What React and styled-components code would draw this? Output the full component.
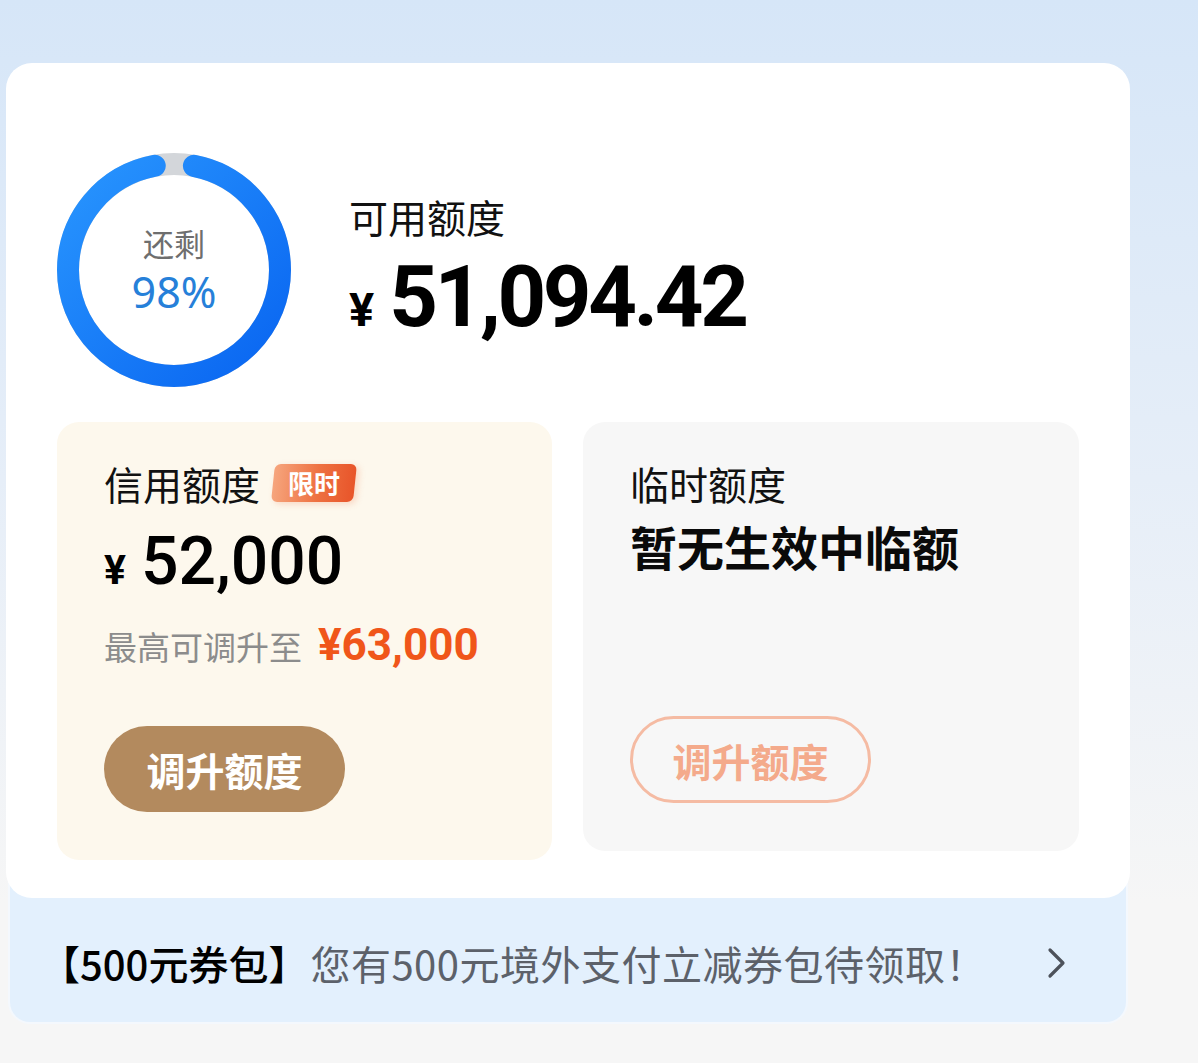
import styled, { createGlobalStyle } from "styled-components";

const GlobalStyle = createGlobalStyle`
    html, body {
        margin: 0;
        padding: 0;
    }
    body {
        background: linear-gradient(180deg, #d6e6f8 0%, #e6eef8 45%, #f6f6f6 85%, #f6f6f6 100%);
        min-height: 1063px;
        font-family: Roboto, "Noto Sans CJK SC", sans-serif;
    }
`;

const CJK = `"Noto Sans CJK SC", "Noto Sans", sans-serif`;
const NUM = `Roboto, "Noto Sans CJK SC", sans-serif`;

// ring drawn as svg: grey track with a blue arc on top
const Ring = ({ percent }) => {
    const r = 106;
    const c = 2 * Math.PI * r;
    const gap = 40; // visible grey gap plus the two round caps
    const blue = c - gap;
    return (
        <RingBox>
            <svg width="234" height="234" viewBox="0 0 234 234">
                <defs>
                    {/* coordinates are in the rotated frame, so the light side lands top-left */}
                    <linearGradient id="ringGrad" x1="234" y1="0" x2="0" y2="234" gradientUnits="userSpaceOnUse">
                        <stop offset="0%" stopColor="#2a98ff" />
                        <stop offset="100%" stopColor="#0762f0" />
                    </linearGradient>
                </defs>
                <circle cx="117" cy="117" r={r} fill="none" stroke="#d3d6da" strokeWidth="22" />
                <g transform="rotate(-90 117 117)">
                    <circle
                        cx="117"
                        cy="117"
                        r={r}
                        fill="none"
                        stroke="url(#ringGrad)"
                        strokeWidth="22"
                        strokeLinecap="round"
                        strokeDasharray={`${blue} ${c}`}
                        strokeDashoffset={-gap / 2}
                    />
                </g>
            </svg>
            <RingText>
                <RingLabel>还剩</RingLabel>
                <RingValue>{percent}%</RingValue>
            </RingText>
        </RingBox>
    );
};

const Chevron = () => (
    <svg width="22" height="32" viewBox="0 0 22 32">
        <path d="M4 3 L17 16 L4 29" fill="none" stroke="#4d525b" strokeWidth="3.2" strokeLinecap="round" strokeLinejoin="round" />
    </svg>
);

const App = () => {
    return (
        <>
            <GlobalStyle />
            <Page>
                <Card>
                    <TopRow>
                        <Ring percent={98} />
                        <Available>
                            <Title>可用额度</Title>
                            <BigAmount>
                                <Yen $size="47px">¥</Yen>
                                <span>51,094.42</span>
                            </BigAmount>
                        </Available>
                    </TopRow>
                    <SubGrid>
                        <SubCard $bg="#fdf8ed" $height="438px">
                            <TitleRow>
                                <Title>信用额度</Title>
                                <Badge><span>限时</span></Badge>
                            </TitleRow>
                            <MidAmount>
                                <Yen $size="41px">¥</Yen>
                                <span>52,000</span>
                            </MidAmount>
                            <Hint>
                                最高可调升至<Highlight>¥63,000</Highlight>
                            </Hint>
                            <FilledButton>调升额度</FilledButton>
                        </SubCard>
                        <SubCard $bg="#f7f7f7" $height="429px">
                            <Title>临时额度</Title>
                            <Status>暂无生效中临额</Status>
                            <OutlineButton>调升额度</OutlineButton>
                        </SubCard>
                    </SubGrid>
                </Card>
                <Banner>
                    <BannerText>
                        <strong>【500元券包】</strong>您有500元境外支付立减券包待领取！
                    </BannerText>
                    <Chevron />
                </Banner>
            </Page>
        </>
    );
};

export default App;


const Page = styled.div`
    display: flex;
    flex-direction: column;
    padding: 63px 68px 0 6px;
    width: 1124px;
`;

const Card = styled.div`
    position: relative;
    z-index: 2;
    background: #ffffff;
    border-radius: 26px;
    padding: 90px 51px 38px 51px;
`;

const TopRow = styled.div`
    display: flex;
    align-items: center;
    gap: 58px;
    height: 234px;
    margin-bottom: 35px;
`;

const RingBox = styled.div`
    position: relative;
    width: 234px;
    height: 234px;
    flex-shrink: 0;
    svg {
        display: block;
    }
`;

const RingText = styled.div`
    position: absolute;
    inset: 0;
    display: flex;
    flex-direction: column;
    align-items: center;
    justify-content: center;
`;

const RingLabel = styled.div`
    font-family: ${CJK};
    font-size: 31px;
    line-height: 44px;
    color: #6e6e6e;
`;

const RingValue = styled.div`
    font-family: "Noto Sans", ${NUM};
    font-size: 43px;
    line-height: 54px;
    color: #2680d9;
`;

const Available = styled.div`
    display: flex;
    flex-direction: column;
    margin-top: 8px;
`;

const Title = styled.div`
    font-family: ${CJK};
    font-size: 39px;
    line-height: 50px;
    color: #111;
`;

const BigAmount = styled.div`
    display: flex;
    align-items: baseline;
    font-family: ${NUM};
    font-weight: 700;
    font-size: 85px;
    line-height: 96px;
    letter-spacing: -3.4px;
    color: #000;
    margin-top: 8px;
`;

const Yen = styled.span`
    font-family: ${NUM};
    font-weight: 700;
    font-size: ${(p) => p.$size};
    letter-spacing: 0;
    margin-right: 15px;
`;

const SubGrid = styled.div`
    display: grid;
    grid-template-columns: 495px 496px;
    gap: 31px;
    align-items: start;
`;

const SubCard = styled.div`
    display: flex;
    flex-direction: column;
    align-items: flex-start;
    box-sizing: border-box;
    height: ${(p) => p.$height};
    background: ${(p) => p.$bg};
    border-radius: 22px;
    padding: 36px 47px 0 47px;
`;

const TitleRow = styled.div`
    display: flex;
    align-items: center;
`;

const Badge = styled.div`
    margin-left: 13px;
    height: 38px;
    width: 82px;
    display: flex;
    align-items: center;
    justify-content: center;
    border-radius: 6px;
    transform: skewX(-6deg);
    background: linear-gradient(90deg, #f6a57d 0%, #ee7141 55%, #e8552a 100%);
    box-shadow: 3px 2px 6px rgba(240, 120, 70, 0.25);
    span {
        display: block;
        transform: skewX(6deg);
        font-family: ${CJK};
        font-weight: 700;
        font-size: 26px;
        color: #fff;
        line-height: 38px;
    }
`;

const MidAmount = styled.div`
    display: flex;
    align-items: baseline;
    font-family: ${NUM};
    font-weight: 500;
    font-size: 66px;
    line-height: 72px;
    color: #000;
    margin-top: 18px;
`;

const Hint = styled.div`
    display: flex;
    align-items: baseline;
    font-family: ${CJK};
    font-size: 33px;
    line-height: 50px;
    color: #8c8c8c;
    margin-top: 14px;
`;

const Highlight = styled.span`
    font-family: ${NUM};
    font-weight: 700;
    font-size: 44px;
    color: #f0561a;
    margin-left: 16px;
`;

const FilledButton = styled.button`
    margin-top: 55px;
    width: 241px;
    height: 86px;
    border: none;
    border-radius: 43px;
    background: #b38a5e;
    color: #fff;
    font-family: ${CJK};
    font-weight: 700;
    font-size: 39px;
    padding: 0;
`;

const Status = styled.div`
    font-family: ${CJK};
    font-weight: 700;
    font-size: 47px;
    line-height: 60px;
    color: #0a0a0a;
    margin-top: 8px;
`;

const OutlineButton = styled.button`
    margin-top: 140px;
    width: 241px;
    height: 87px;
    box-sizing: border-box;
    border: 3px solid #f5bba3;
    border-radius: 44px;
    background: transparent;
    color: #f4aa8b;
    font-family: ${CJK};
    font-weight: 700;
    font-size: 39px;
    padding: 0;
`;

const Banner = styled.div`
    position: relative;
    z-index: 1;
    margin: -20px 2px 0 2px;
    height: 146px;
    box-sizing: border-box;
    padding: 26px 58px 0 30px;
    display: flex;
    align-items: center;
    justify-content: space-between;
    background: #e3f0fd;
    border: 2px solid #f4f8fd;
    border-top: none;
    border-radius: 0 0 22px 22px;
`;

const BannerText = styled.div`
    font-family: ${CJK};
    font-size: 40px;
    line-height: 50px;
    letter-spacing: 0.5px;
    color: #5c616a;
    strong {
        font-weight: 500;
        letter-spacing: 0;
        color: #000;
        margin-right: 2px;
    }
`;
